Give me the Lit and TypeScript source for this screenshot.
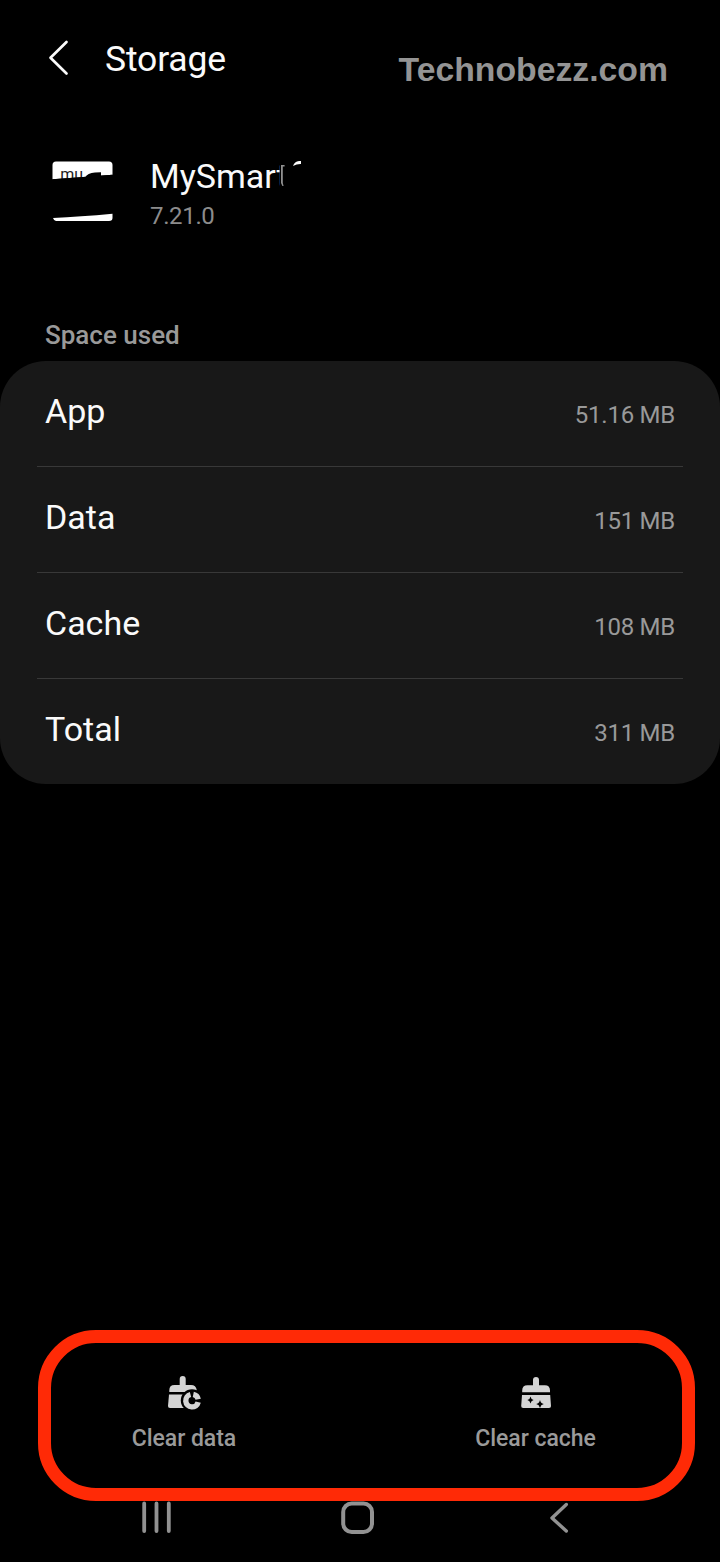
import { LitElement, html, css } from "lit";
import { customElement } from "lit/decorators.js";

interface UsageRow {
  label: string;
  value: string;
}

const USAGE: UsageRow[] = [
  { label: "App", value: "51.16 MB" },
  { label: "Data", value: "151 MB" },
  { label: "Cache", value: "108 MB" },
  { label: "Total", value: "311 MB" },
];

@customElement("app-root")
export class AppRoot extends LitElement {
  static styles = css`
    :host {
      display: block;
      background: #000;
      color: #fafafa;
      font-family: Roboto, sans-serif;
    }
    .screen {
      width: 720px;
      height: 1562px;
      box-sizing: border-box;
      display: flex;
      flex-direction: column;
      overflow: hidden;
      white-space: nowrap;
    }
    svg {
      display: block;
    }
    .header {
      display: flex;
      height: 118px;
      padding: 0 52px 0 45px;
      align-items: center;
      box-sizing: border-box;
    }
    .back {
      width: 28px;
      height: 40px;
      margin-right: 32px;
    }
    .heading {
      font-size: 35.5px;
      font-weight: 400;
      line-height: 40px;
      letter-spacing: -0.15px;
      margin: 0;
    }
    .watermark {
      margin: 19px 0 0 auto;
      font: bold 33.75px/40px "Liberation Sans", sans-serif;
      color: #949494;
    }
    .app-info {
      display: flex;
      height: 200px;
      padding: 38px 0 0 50px;
      box-sizing: border-box;
    }
    .app-icon {
      width: 66px;
      height: 70px;
    }
    .logo-text {
      font: 400 16px Roboto, sans-serif;
      fill: #222;
    }
    .app-text {
      margin-left: 34px;
    }
    .title-line {
      display: grid;
      width: 160px;
      height: 40px;
    }
    .title-line > * {
      grid-area: 1 / 1;
    }
    .app-name {
      font-size: 34px;
      line-height: 40px;
    }
    .version {
      font-size: 24px;
      line-height: 28px;
      letter-spacing: -0.35px;
      margin-top: 6px;
      color: #8c8c8c;
    }
    .section {
      font-size: 26px;
      font-weight: 500;
      line-height: 34px;
      height: 43px;
      padding-left: 45px;
      color: #999;
    }
    .card {
      background: #181818;
      border-radius: 46px;
      height: 423px;
      padding: 0 37px;
      box-sizing: border-box;
    }
    .row {
      display: flex;
      justify-content: space-between;
      align-items: baseline;
      height: 106px;
      padding: 29px 8px 0;
      box-sizing: border-box;
      border-bottom: 1px solid #383838;
    }
    .row:last-child {
      border-bottom: 0;
    }
    .label {
      font-size: 34px;
      line-height: 42px;
    }
    .value {
      font-size: 24px;
      letter-spacing: -0.25px;
      color: #999;
    }
    .actions {
      display: grid;
      grid-template-columns: 266px 1fr;
      margin: auto 25px 0 38px;
      height: 171px;
      box-sizing: border-box;
      border: 13px solid #ff2a06;
      border-radius: 58px;
      flex: none;
    }
    .action {
      display: flex;
      flex-direction: column;
      align-items: center;
      padding-top: 32px;
      color: #9a9a9a;
      font-size: 23px;
      font-weight: 500;
      line-height: 28px;
      letter-spacing: -0.05px;
    }
    .action svg {
      margin-bottom: 13px;
      fill: #d4d4d4;
    }
    .action:last-child {
      padding-left: 72px;
    }
    .nav {
      display: flex;
      height: 61px;
      flex: none;
    }
  `;

  render() {
    return html`
      <div class="screen">
        <header class="header">
          <svg class="back" viewBox="0 0 28 40" fill="none" stroke="#fafafa" stroke-width="2.7" stroke-linecap="round" stroke-linejoin="round">
            <path d="M21.5 3 L5.5 18.8 L21.5 34.5" />
          </svg>
          <h1 class="heading">Storage</h1>
          <div class="watermark">Technobezz.com</div>
        </header>

        <section class="app-info">
          <svg class="app-icon" viewBox="0 0 66 70">
            <path fill="#fff" d="M2.5 23.3 V9 Q2.5 5.5 6 5.5 H59 Q62.5 5.5 62.5 9 V18.7 Q45 20 30 21.2 Q16 22 2.5 23.3Z" />
            <text class="logo-text" x="10.2" y="23.5">mu</text>
            <path fill="#000" d="M2.5 23.3 Q16 22 30 21.2 Q45 20 62.5 18.7 V50 H2.5Z" />
            <path fill="#000" d="M35 21.8 Q37.5 17 45 16.6 L51 16.2 V20.5 Z" />
            <path fill="#fff" d="M3 62 Q30 60.8 62.5 57.8 V62 Q62.5 65 59 65 H6 Q4 65 3 62Z" />
          </svg>
          <div class="app-text">
            <div class="title-line">
              <span class="app-name">MySmart</span>
              <svg width="160" height="40" viewBox="0 0 160 40">
                <path fill="#000" d="M129.6 0 H145 V40 H129.6 Z" />
                <path fill="#909090" d="M131 9 H134.6 V10.4 H132.8 V27 L133.6 30 H132.4 L131 27 Z" />
                <path fill="#fafafa" d="M143 10 Q144.5 5.4 149 5 H151 V8 Q147 7.8 143 10Z" />
              </svg>
            </div>
            <div class="version">7.21.0</div>
          </div>
        </section>

        <div class="section">Space used</div>
        <div class="card">
          ${USAGE.map(
            (row) => html`
              <div class="row">
                <span class="label">${row.label}</span>
                <span class="value">${row.value}</span>
              </div>
            `
          )}
        </div>

        <div class="actions">
          <div class="action">
            <svg width="36" height="37" viewBox="0 0 36 37">
              <mask id="chart-gap">
                <rect width="36" height="37" fill="#fff" />
                <circle cx="26" cy="25.4" r="11.2" fill="#000" />
              </mask>
              <g mask="url(#chart-gap)">
                <path d="M3.3 16.9 V15.2 Q3.3 10 8.5 10 H13.7 V4 a3 3 0 0 1 6 0 V10 H25 Q30 10 30.8 15.2 V16.9 Z" />
                <path d="M3 19.5 H30 V33 H4 Q1.9 33 2 31 Z" />
              </g>
              <path fill="none" stroke="#d4d4d4" stroke-width="5.4" d="M27.3 19.4 A6.3 6.3 0 0 1 32.2 24.3 M32.2 27.1 A6.3 6.3 0 1 1 24.5 19.5" />
            </svg>
            <span>Clear data</span>
          </div>
          <div class="action">
            <svg width="36" height="37" viewBox="0 0 36 37">
              <g transform="translate(0 -1)">
                <path d="M4.2 18.2 V16.5 Q4.2 11.3 9.5 11.3 H15 V6 a3 3 0 0 1 6 0 V11.3 H26.8 Q32 11.3 32 16.5 V18.2 Z" />
                <path fill-rule="evenodd" d="M4 21 H32.2 L33 32 Q33.1 34 31 34 H5.2 Q3.1 34 3.2 32 Z M12.5 22.5 Q13 25.5 15.6 26 Q13 26.5 12.5 29.5 Q12 26.5 9.4 26 Q12 25.5 12.5 22.5Z M22 26 Q22.7 29.3 25.8 30 Q22.7 30.7 22 33.9 Q21.3 30.7 18.2 30 Q21.3 29.3 22 26Z" />
              </g>
            </svg>
            <span>Clear cache</span>
          </div>
        </div>

        <nav class="nav">
          <svg width="720" height="61" viewBox="0 1501 720 61" fill="none" stroke="#929292" stroke-linecap="round" stroke-linejoin="round">
            <path stroke-width="3.8" d="M144.2 1503.5 V1531 M156.5 1503.5 V1531 M168.8 1503.5 V1531" />
            <rect x="343.2" y="1503.5" width="28.8" height="28.5" rx="8.5" stroke-width="4" />
            <path stroke-width="3.4" d="M566.3 1504.5 L552 1518 L566.3 1531" />
          </svg>
        </nav>
      </div>
    `;
  }
}
